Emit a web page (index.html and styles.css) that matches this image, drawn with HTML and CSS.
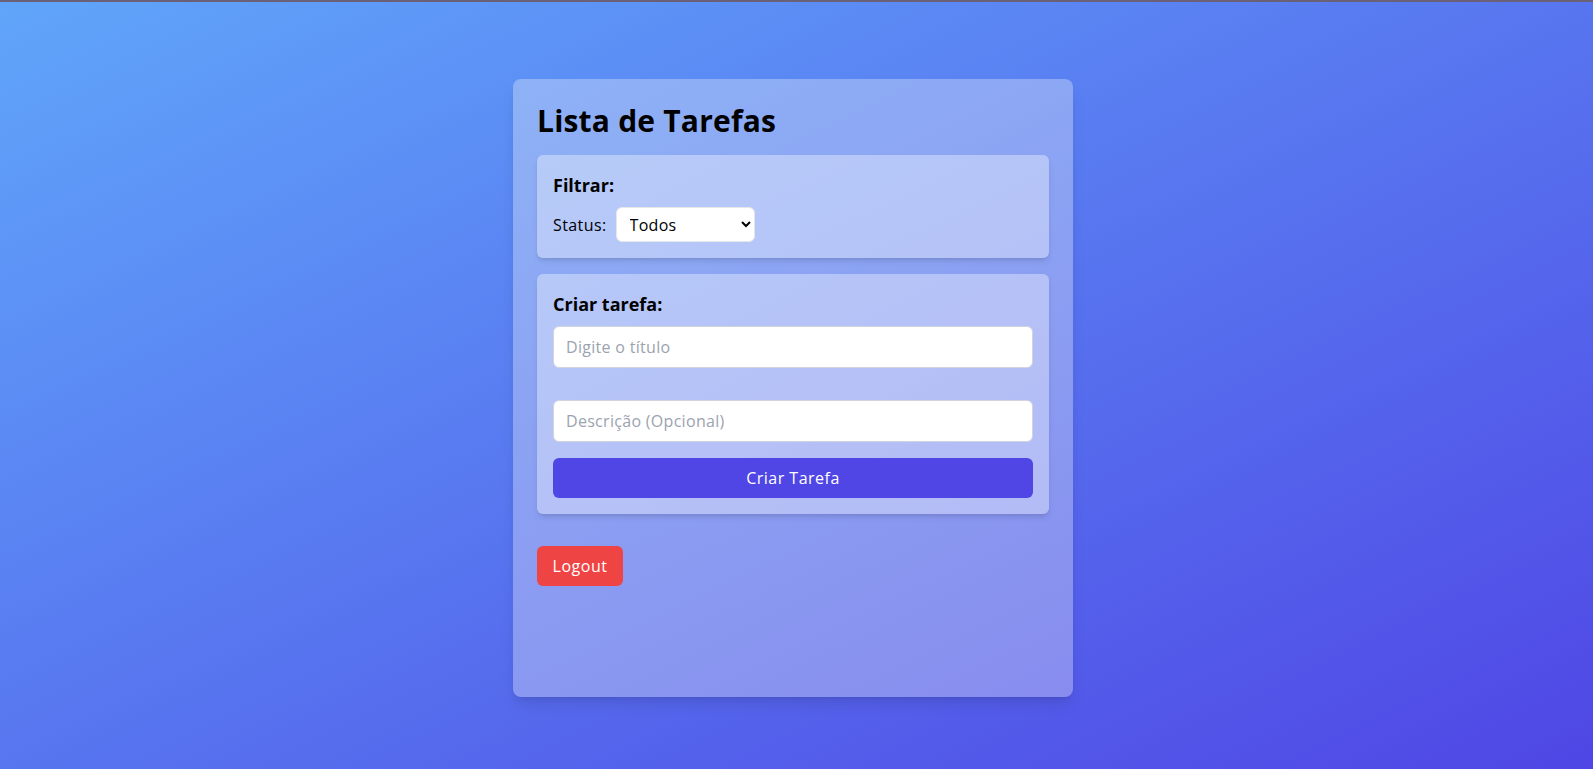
FILE: index.html
```html
<!DOCTYPE html>
<html lang="pt-BR">
<head>
<meta charset="utf-8">
<title>Lista de Tarefas</title>
<link rel="stylesheet" href="styles.css">
</head>
<body>
<div class="page">
  <main class="card">
    <h1 class="title">Lista de Tarefas</h1>
    <section class="panel">
      <h2 class="panel-title">Filtrar:</h2>
      <div class="filter-row">
        <label class="filter-label" for="status">Status:</label>
        <select id="status" class="select">
          <option>Todos</option>
          <option>Pendentes</option>
          <option>Concluídas</option>
        </select>
      </div>
    </section>
    <section class="panel">
      <h2 class="panel-title">Criar tarefa:</h2>
      <form class="task-form">
        <input class="field field-title" type="text" placeholder="Digite o título">
        <input class="field field-desc" type="text" placeholder="Descrição (Opcional)">
        <button type="button" class="btn btn-create">Criar Tarefa</button>
      </form>
    </section>
    <button type="button" class="btn btn-logout">Logout</button>
  </main>
</div>
</body>
</html>
```
FILE: styles.css
```css
* { box-sizing: border-box; }

html, body { height: 100%; }

body {
  margin: 0;
  min-height: 100vh;
  border-top: 2px solid #6a6178;
  background: linear-gradient(to bottom right, #60a5fa, #4f46e5);
  font-family: "Open Sans", "Noto Sans", sans-serif;
  color: #000;
}

.page {
  display: flex;
  justify-content: center;
  padding-top: 77px;
  padding-right: 7px;
}

.card {
  width: 560px;
  min-height: 618px;
  padding: 24px;
  background: rgba(250, 248, 250, 0.32);
  border-radius: 8px;
  box-shadow: 0 10px 15px -3px rgba(0, 0, 0, 0.1), 0 4px 6px -4px rgba(0, 0, 0, 0.1);
}

.title {
  margin: 0 0 16px;
  font-size: 30px;
  line-height: 36px;
  font-weight: 700;
  letter-spacing: 0.2px;
}

.panel {
  background: rgba(255, 255, 255, 0.36);
  border-radius: 6px;
  padding: 16px;
  margin-bottom: 16px;
  box-shadow: 0 4px 6px -1px rgba(0, 0, 0, 0.1), 0 2px 4px -2px rgba(0, 0, 0, 0.1);
}

.panel + .panel { margin-bottom: 32px; }

.panel-title {
  margin: 0 0 8px;
  font-size: 18px;
  line-height: 28px;
  font-weight: 700;
}

.filter-row {
  display: flex;
  align-items: center;
  gap: 9px;
}

.filter-label {
  font-size: 16px;
  letter-spacing: 0.4px;
}

.select {
  width: 139px;
  height: 35px;
  padding: 4px 8px 4px 9px;
  border: 1px solid #e5e7eb;
  border-radius: 6px;
  background: #fff;
  font-family: inherit;
  font-size: 16px;
  letter-spacing: 0.3px;
  color: #000;
}

.task-form {
  display: flex;
  flex-direction: column;
}

.field {
  width: 100%;
  height: 42px;
  padding: 8px 12px;
  border: 1px solid #d1d5db;
  border-radius: 6px;
  background: #fff;
  font-family: inherit;
  font-size: 16px;
  letter-spacing: 0.3px;
  color: #111;
}

.field::placeholder { color: #9ca3af; }

.field-title { margin-bottom: 32px; }
.field-desc { margin-bottom: 16px; }

.btn {
  border: none;
  border-radius: 6px;
  color: #fff;
  font-family: inherit;
  font-size: 16px;
  letter-spacing: 0.5px;
  cursor: pointer;
}

.btn-create {
  width: 100%;
  height: 40px;
  background: #4f46e5;
}

.btn-logout {
  display: block;
  width: 86px;
  height: 40px;
  background: #ef4444;
}
```
